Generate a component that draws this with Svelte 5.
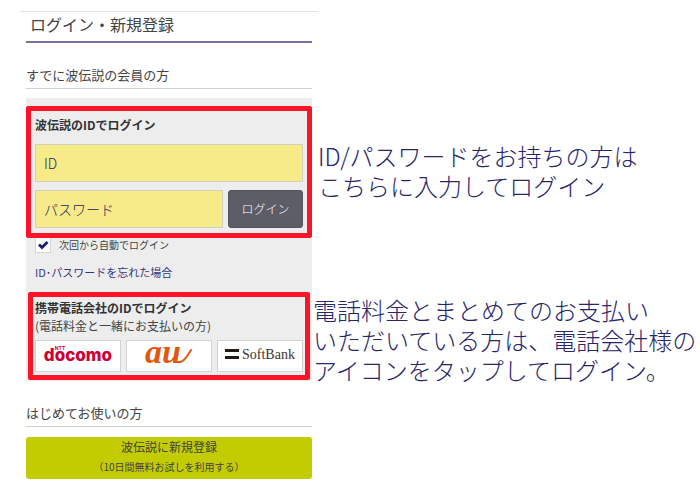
<script lang="ts">
  let userId = '';
  let password = '';
  let remember = true;

  function login() {
    if (!userId || !password) return;
    password = '';
  }
</script>

<div class="guide">
  <main class="screen">
    <h1>ログイン・新規登録</h1>

    <section class="block">
      <h2>すでに波伝説の会員の方</h2>

      <div class="panel">
        <form class="framed frame-login" on:submit|preventDefault={login}>
          <h3>波伝説のIDでログイン</h3>
          <input class="field" type="text" placeholder="ID" aria-label="ID" bind:value={userId} />
          <div class="password-row">
            <input class="field" type="password" placeholder="パスワード" aria-label="パスワード" bind:value={password} />
            <button class="login" type="submit">ログイン</button>
          </div>
        </form>

        <label class="remember">
          <input type="checkbox" bind:checked={remember} />
          次回から自動でログイン
        </label>
        <a class="forgot" href="#forgot">ID･パスワードを忘れた場合</a>

        <div class="framed frame-carrier">
          <h3>携帯電話会社のIDでログイン</h3>
          <p>(電話料金と一緒にお支払いの方)</p>
          <div class="carriers">
            <button type="button" aria-label="NTT docomo">
              <svg width="76" height="28" viewBox="0 0 76 28">
                <text class="docomo" x="38" y="19" text-anchor="middle">docomo</text>
                <text class="ntt" x="20" y="8" text-anchor="middle">NTT</text>
              </svg>
            </button>
            <button type="button" aria-label="au">
              <svg width="76" height="28" viewBox="0 0 76 28">
                <text class="au" x="14" y="21">au</text>
                <path d="M46 20 C53 21 56 14 60 8" fill="none" stroke="#e2570f" stroke-width="2" stroke-linecap="round" />
              </svg>
            </button>
            <button type="button" aria-label="SoftBank">
              <svg width="76" height="28" viewBox="0 0 76 28">
                <path d="M3 7h14v3H3zM3 14h14v3H3z" fill="#231815" />
                <text class="softbank" x="20" y="17">SoftBank</text>
              </svg>
            </button>
          </div>
        </div>
      </div>
    </section>

    <section class="block">
      <h2>はじめてお使いの方</h2>
      <button class="signup" type="button">
        波伝説に新規登録
        <small>（10日間無料お試しを利用する）</small>
      </button>
    </section>
  </main>

  <aside class="notes">
    <p>ID/パスワードをお持ちの方は<br />こちらに入力してログイン</p>
    <p class="wide">電話料金とまとめてのお支払い<br />いただいている方は、電話会社様の<br />アイコンをタップしてログイン。</p>
  </aside>
</div>

<style>
  :global(body) {
    margin: 0;
    background: #fff;
  }

  .guide {
    display: grid;
    grid-template-columns: 318fr 382fr;
    font-family: "Noto Sans CJK JP", sans-serif;
    color: #444;
  }

  .guide * {
    box-sizing: border-box;
  }

  h1,
  h2,
  h3,
  p {
    margin: 0;
    font-weight: 400;
  }

  input,
  button {
    font: inherit;
    margin: 0;
  }

  .screen {
    margin: 11px 0 0 20px;
    padding: 0 6px;
    border-top: 1px solid #e4e4e4;
  }

  h1 {
    padding: 0 4px 5px;
    border-bottom: 2px solid #77719f;
    font-size: 16px;
    line-height: 24px;
  }

  .block {
    margin-top: 22px;
  }

  h2 {
    padding-bottom: 3px;
    border-bottom: 1px solid #d0d0d0;
    font-size: 13px;
    line-height: 20px;
  }

  .panel {
    margin-top: 9px;
    padding: 18px 9px 9px;
    background: #ededed;
    font-size: 12px;
    line-height: 18px;
  }

  h3 {
    color: #333;
    font-size: 12px;
    font-weight: 700;
  }

  /* red marker drawn over the area that a note talks about */
  .framed {
    position: relative;
  }

  .framed::after {
    content: "";
    position: absolute;
    border: 5px solid #fa1428;
    border-radius: 2px;
    pointer-events: none;
  }

  .frame-login::after {
    inset: -10px -9px -10px -9px;
  }

  .frame-carrier::after {
    inset: -7px -7px -8px -7px;
  }

  .field {
    display: block;
    width: 100%;
    min-width: 0;
    height: 38px;
    padding: 0 8px;
    border: 1px solid #d3d1bd;
    border-radius: 0;
    background: #f7eb89;
    color: #29256b;
    font-size: 14px;
    font-weight: 300;
  }

  .field::placeholder {
    color: #1d1960;
    opacity: 1;
  }

  h3 + .field {
    margin-top: 10px;
  }

  .password-row {
    display: flex;
    gap: 5px;
    margin-top: 8px;
  }

  .login {
    flex: 0 0 28%;
    padding: 0;
    border: 1px solid #55555f;
    border-radius: 3px;
    background: #5d5d68;
    color: #fff;
    font-size: 12px;
    font-weight: 300;
    cursor: pointer;
  }

  .remember {
    display: flex;
    align-items: center;
    gap: 8px;
    margin-top: 9px;
    font-size: 10px;
    line-height: 16px;
  }

  .remember input {
    appearance: none;
    width: 16px;
    height: 16px;
    border: 1px solid #d6d6d6;
    background: #fff;
  }

  .remember input:checked {
    background: #fff url("data:image/svg+xml,%3Csvg xmlns='http://www.w3.org/2000/svg' viewBox='0 0 14 14'%3E%3Cpath d='M3 6.5l3 3 5.500-5.500' fill='none' stroke='%23201c66' stroke-width='2.800'/%3E%3C/svg%3E") center / 14px no-repeat;
  }

  .forgot {
    display: block;
    margin-top: 10px;
    color: #39357a;
    font-size: 11px;
    text-decoration: none;
  }

  .frame-carrier {
    margin-top: 18px;
  }

  .carriers {
    display: grid;
    grid-template-columns: repeat(3, 1fr);
    gap: 5px;
    margin-top: 5px;
  }

  .carriers button {
    display: flex;
    align-items: center;
    justify-content: center;
    height: 32px;
    padding: 0;
    border: 1px solid #d3d3d3;
    background: #fff;
    cursor: pointer;
  }

  .carriers svg {
    overflow: visible;
  }

  .docomo {
    fill: #cc0033;
    font: 800 17px Inter, sans-serif;
  }

  .ntt {
    fill: #cc0033;
    font: 700 5px Inter, sans-serif;
  }

  .au {
    fill: #e2570f;
    font: italic 700 34px "Liberation Serif", serif;
  }

  .softbank {
    fill: #3a3432;
    font: 14px "Liberation Serif", serif;
  }

  .signup {
    display: block;
    width: 100%;
    margin-top: 10px;
    padding: 0 0 2px;
    border: 0;
    border-radius: 3px;
    background: #c3cc00;
    color: #444;
    font-size: 12px;
    line-height: 20px;
    cursor: pointer;
  }

  .signup small {
    display: block;
    font-size: 10px;
  }

  .notes {
    display: flex;
    flex-direction: column;
    gap: 94px;
    padding-top: 141px;
    color: #29256b;
    font-size: 24px;
    font-weight: 300;
    line-height: 30px;
    white-space: nowrap;
  }

  .notes p {
    font-weight: inherit;
  }

  .notes .wide {
    margin-left: -5px;
  }
</style>
